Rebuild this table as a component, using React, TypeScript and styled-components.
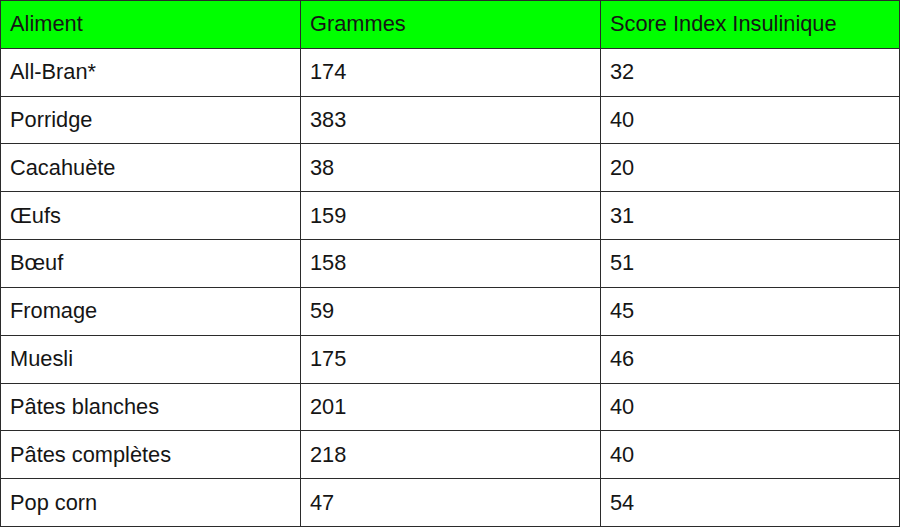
import React from 'react'
import styled, { createGlobalStyle } from 'styled-components';

type rowData = [string, string, string];

const rows: rowData[] = [
    ["All-Bran*", "174", "32"],
    ["Porridge", "383", "40"],
    ["Cacahuète", "38", "20"],
    ["Œufs", "159", "31"],
    ["Bœuf", "158", "51"],
    ["Fromage", "59", "45"],
    ["Muesli", "175", "46"],
    ["Pâtes blanches", "201", "40"],
    ["Pâtes complètes", "218", "40"],
    ["Pop corn", "47", "54"],
];

const GlobalStyle = createGlobalStyle`
    html, body {
        margin:0;
        padding:0;
        background:#ffffff;
    }
`;

const Grid = styled.div`
    box-sizing:border-box;
    width:900px;
    height:527px;
    display:grid;
    grid-template-columns:300px 300px 299px;
    grid-template-rows:repeat(11, 1fr);
    border-left:1px solid #2b2b2b;
    border-top:1px solid #2b2b2b;
    font-family:"Liberation Sans", Arial, sans-serif;
    font-size:21.8px;
    color:#151515;
`;

interface ICell {
    $head?: boolean;
}

const Cell = styled.div<ICell>`
    display:flex;
    align-items:center;
    padding-left:9px;
    border-right:1px solid #2b2b2b;
    border-bottom:1px solid #2b2b2b;
    background:${p => p.$head ? "#00ff00" : "#ffffff"};
    white-space:nowrap;
    overflow:hidden;
`;

const App = () => {
    return (
        <>
            <GlobalStyle />
            <Grid>
                <Cell $head>Aliment</Cell>
                <Cell $head>Grammes</Cell>
                <Cell $head>Score Index Insulinique</Cell>
                {rows.map(r => (
                    <React.Fragment key={r[0]}>
                        <Cell>{r[0]}</Cell>
                        <Cell>{r[1]}</Cell>
                        <Cell>{r[2]}</Cell>
                    </React.Fragment>
                ))}
            </Grid>
        </>
    )
}

export default App
